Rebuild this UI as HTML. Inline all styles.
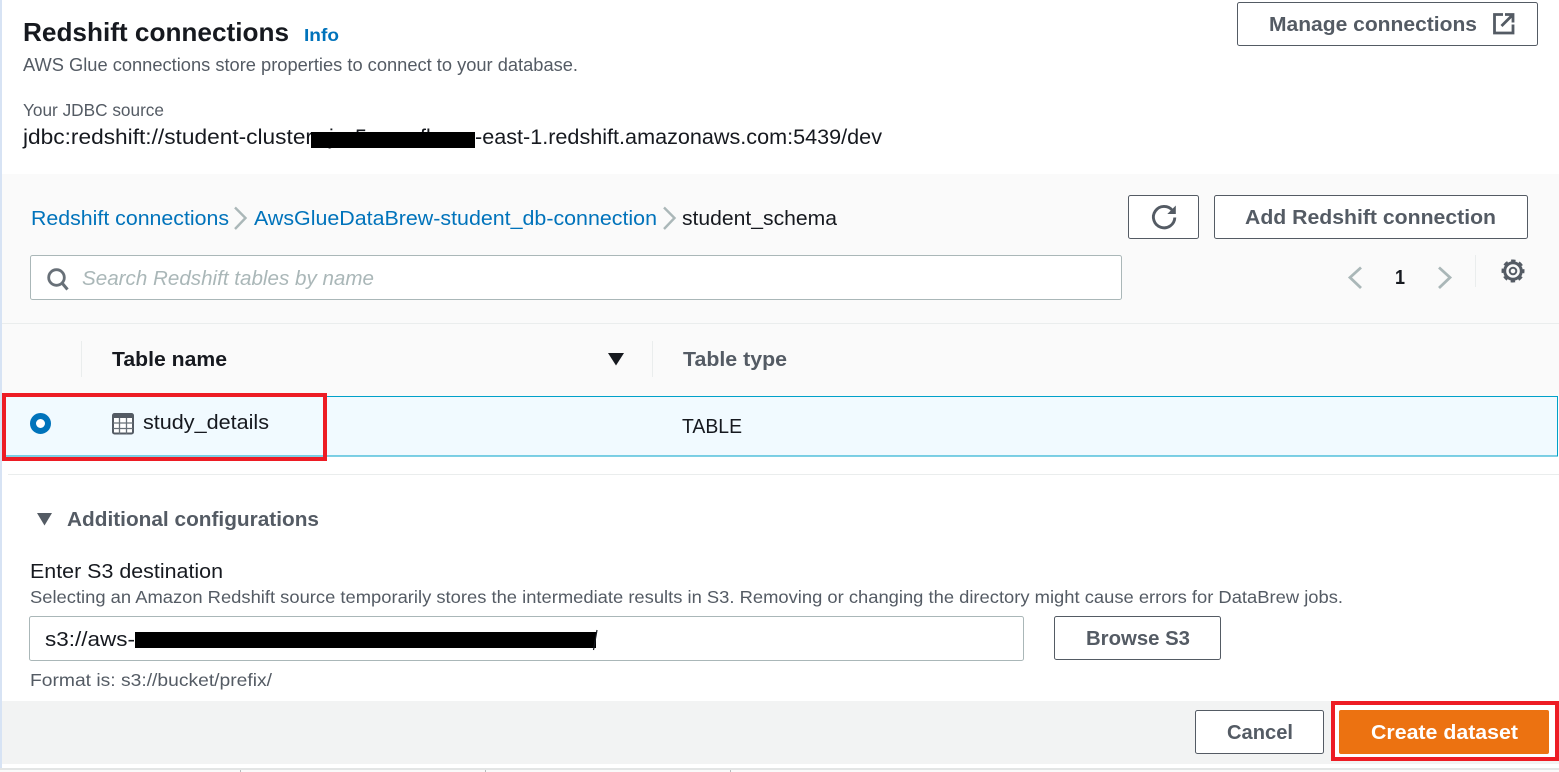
<!DOCTYPE html>
<html lang="en">
<head>
<meta charset="utf-8">
<title>Redshift connections</title>
<style>
html,body{margin:0;padding:0;background:#fff;width:1559px;height:772px;overflow:hidden}
svg{display:block}
text{font-family:"Liberation Sans",sans-serif;white-space:pre}
.b{font-weight:700}
.g{fill:#545b64}
.k{fill:#16191f}
.l{fill:#0073bb}
</style>
</head>
<body>
<svg width="1559" height="772" viewBox="0 0 1559 772" xmlns="http://www.w3.org/2000/svg">
<rect width="1559" height="772" fill="#fff"/>
<rect x="0" y="174" width="1559" height="150" fill="#fafafa"/>
<rect x="2" y="324" width="1557" height="72" fill="#fafafa"/>
<rect x="0" y="323" width="1559" height="1" fill="#eaeded"/>

<text x="23" y="41" font-size="26" class="b k" textLength="266" lengthAdjust="spacingAndGlyphs">Redshift connections</text>
<text x="304" y="41" font-size="17.500" class="b l" textLength="35" lengthAdjust="spacingAndGlyphs">Info</text>
<text x="23" y="71" font-size="18" class="g" textLength="555" lengthAdjust="spacingAndGlyphs">AWS Glue connections store properties to connect to your database.</text>
<text x="23" y="116" font-size="17.500" class="g" textLength="141" lengthAdjust="spacingAndGlyphs">Your JDBC source</text>
<text x="23" y="144" font-size="21.500" class="k" textLength="290" lengthAdjust="spacingAndGlyphs">jdbc:redshift://student-cluster</text>
<text x="329" y="144" font-size="21.500" class="k">j</text>
<text x="355" y="144" font-size="21.500" class="k">5</text>
<text x="420" y="144" font-size="21.500" class="k">fl</text>
<text x="475" y="144" font-size="21.500" class="k" textLength="407" lengthAdjust="spacingAndGlyphs">-east-1.redshift.amazonaws.com:5439/dev</text>
<rect x="311" y="132" width="164" height="16" fill="#000"/>

<rect x="1237.500" y="2.500" width="300" height="43" rx="2" fill="#fff" stroke="#545b64"/>
<text x="1269" y="31" font-size="20.500" class="b g" textLength="208" lengthAdjust="spacingAndGlyphs">Manage connections</text>
<path d="M1503 14.500H1494.500V33H1513V24.500M1501.500 26L1512.500 15M1505 14.500H1513V22.500" fill="none" stroke="#545b64" stroke-width="2.800"/>

<rect x="1128.500" y="195.500" width="70" height="43" rx="2" fill="#fff" stroke="#545b64"/>
<path d="M1172.500 210.500A10.700 10.700 0 1 0 1174.800 217.500" fill="none" stroke="#545b64" stroke-width="2.900"/>
<path d="M1175.800 205.500V214H1167.300Z" fill="#545b64"/>
<rect x="1214.500" y="195.500" width="313" height="43" rx="2" fill="#fff" stroke="#545b64"/>
<text x="1245" y="224" font-size="20.500" class="b g" textLength="251" lengthAdjust="spacingAndGlyphs">Add Redshift connection</text>

<text x="31" y="225" font-size="20.500" class="l" textLength="198" lengthAdjust="spacingAndGlyphs">Redshift connections</text>
<path d="M235 207.500L245.500 218L235 229" fill="none" stroke="#aab7b8" stroke-width="2.400"/>
<text x="254" y="225" font-size="20.500" class="l" textLength="403" lengthAdjust="spacingAndGlyphs">AwsGlueDataBrew-student_db-connection</text>
<path d="M664 207.500L674.500 218L664 229" fill="none" stroke="#aab7b8" stroke-width="2.400"/>
<text x="682" y="225" font-size="20.500" class="k" textLength="155" lengthAdjust="spacingAndGlyphs">student_schema</text>

<rect x="30.500" y="255.500" width="1091" height="44" rx="2" fill="#fff" stroke="#aab7b8"/>
<circle cx="56.500" cy="277.500" r="7.800" fill="none" stroke="#687078" stroke-width="2.800"/>
<path d="M62 283L67.500 289.500" stroke="#687078" stroke-width="3" fill="none"/>
<text x="82" y="285" font-size="20.500" font-style="italic" fill="#aab7b8" textLength="292" lengthAdjust="spacingAndGlyphs">Search Redshift tables by name</text>

<path d="M1361 267.500L1350 277.500L1361 288" fill="none" stroke="#aab7b8" stroke-width="2.800"/>
<text x="1395" y="284" font-size="20.500" class="b k" textLength="10" lengthAdjust="spacingAndGlyphs">1</text>
<path d="M1439 267.500L1450 277.500L1439 288" fill="none" stroke="#aab7b8" stroke-width="2.800"/>
<rect x="1475" y="255" width="1" height="32" fill="#eaeded"/>
<circle cx="1513" cy="271" r="8.300" fill="none" stroke="#545b64" stroke-width="3"/>
<circle cx="1513" cy="271" r="10.500" fill="none" stroke="#545b64" stroke-width="2" stroke-dasharray="4.500 3.746" stroke-dashoffset="2.250"/>
<circle cx="1513" cy="271" r="3.300" fill="none" stroke="#545b64" stroke-width="2"/>

<rect x="81" y="341" width="1" height="36" fill="#eaeded"/>
<rect x="652" y="341" width="1" height="36" fill="#eaeded"/>
<text x="112" y="366" font-size="20.500" class="b k" textLength="115" lengthAdjust="spacingAndGlyphs">Table name</text>
<path d="M608 353H624L616 365.500Z" fill="#16191f"/>
<text x="683" y="366" font-size="20.500" class="b g" textLength="104" lengthAdjust="spacingAndGlyphs">Table type</text>

<rect x="2" y="396.500" width="1555.500" height="59.500" fill="#f1faff" stroke="#00a1c9"/>
<circle cx="40.500" cy="423.500" r="7.500" fill="#fff" stroke="#0073bb" stroke-width="6"/>
<rect x="113" y="414" width="20" height="19.500" rx="1.500" fill="#fff" stroke="#545b64" stroke-width="2"/>
<path d="M113 423H133M113 428.500H133M119.500 415V434M126.500 415V434" stroke="#687078" stroke-width="1.300" fill="none"/>
<rect x="113" y="414" width="20" height="4" fill="#545b64"/>
<text x="143" y="429" font-size="20.500" class="k" textLength="126" lengthAdjust="spacingAndGlyphs">study_details</text>
<text x="682" y="433" font-size="20.500" class="k" textLength="60" lengthAdjust="spacingAndGlyphs">TABLE</text>
<rect x="4" y="395" width="321" height="64" fill="none" stroke="#ed1c24" stroke-width="4"/>

<rect x="8" y="474" width="1551" height="1" fill="#eaeded"/>
<path d="M37 513H52L44.500 525.500Z" fill="#545b64"/>
<text x="67" y="526" font-size="20.500" class="b g" textLength="252" lengthAdjust="spacingAndGlyphs">Additional configurations</text>

<text x="30" y="578" font-size="20.500" class="k" textLength="193" lengthAdjust="spacingAndGlyphs">Enter S3 destination</text>
<text x="30" y="603" font-size="17.500" class="g" textLength="1313" lengthAdjust="spacingAndGlyphs">Selecting an Amazon Redshift source temporarily stores the intermediate results in S3. Removing or changing the directory might cause errors for DataBrew jobs.</text>
<rect x="29.500" y="616.500" width="994" height="44" rx="2" fill="#fff" stroke="#aab7b8"/>
<text x="45" y="646" font-size="20.500" class="k" textLength="90" lengthAdjust="spacingAndGlyphs">s3://aws-</text>
<rect x="135" y="632" width="461" height="16" fill="#000"/>
<path d="M597 630L593.500 650" stroke="#16191f" stroke-width="1.200"/>
<rect x="1054.500" y="616.500" width="166" height="43" rx="2" fill="#fff" stroke="#545b64"/>
<text x="1086" y="645" font-size="20.500" class="b g" textLength="104" lengthAdjust="spacingAndGlyphs">Browse S3</text>
<text x="30" y="686" font-size="17.500" class="g" textLength="242" lengthAdjust="spacingAndGlyphs">Format is: s3://bucket/prefix/</text>

<rect x="0" y="701" width="1559" height="63" fill="#f2f3f3"/>
<rect x="1195.500" y="710.500" width="128" height="43" rx="2" fill="#fff" stroke="#545b64"/>
<text x="1227" y="739" font-size="20.500" class="b g" textLength="66" lengthAdjust="spacingAndGlyphs">Cancel</text>
<rect x="1333" y="703" width="224" height="56" fill="#fff" stroke="#ed1c24" stroke-width="4"/>
<rect x="1339" y="710" width="210" height="44" rx="2" fill="#ec7211"/>
<text x="1371" y="739" font-size="20.500" class="b" fill="#fff" textLength="147" lengthAdjust="spacingAndGlyphs">Create dataset</text>

<rect x="0" y="768" width="1559" height="2" fill="#e3e5e5"/>
<rect x="0" y="770" width="1559" height="2" fill="#fafafa"/>
<rect x="240" y="770" width="1" height="2" fill="#b5bcbc"/>
<rect x="485" y="770" width="1" height="2" fill="#b5bcbc"/>
<rect x="730" y="770" width="1" height="2" fill="#b5bcbc"/>
<rect x="0" y="0" width="2" height="768" fill="#d7e3f4"/>
</svg>
</body>
</html>
